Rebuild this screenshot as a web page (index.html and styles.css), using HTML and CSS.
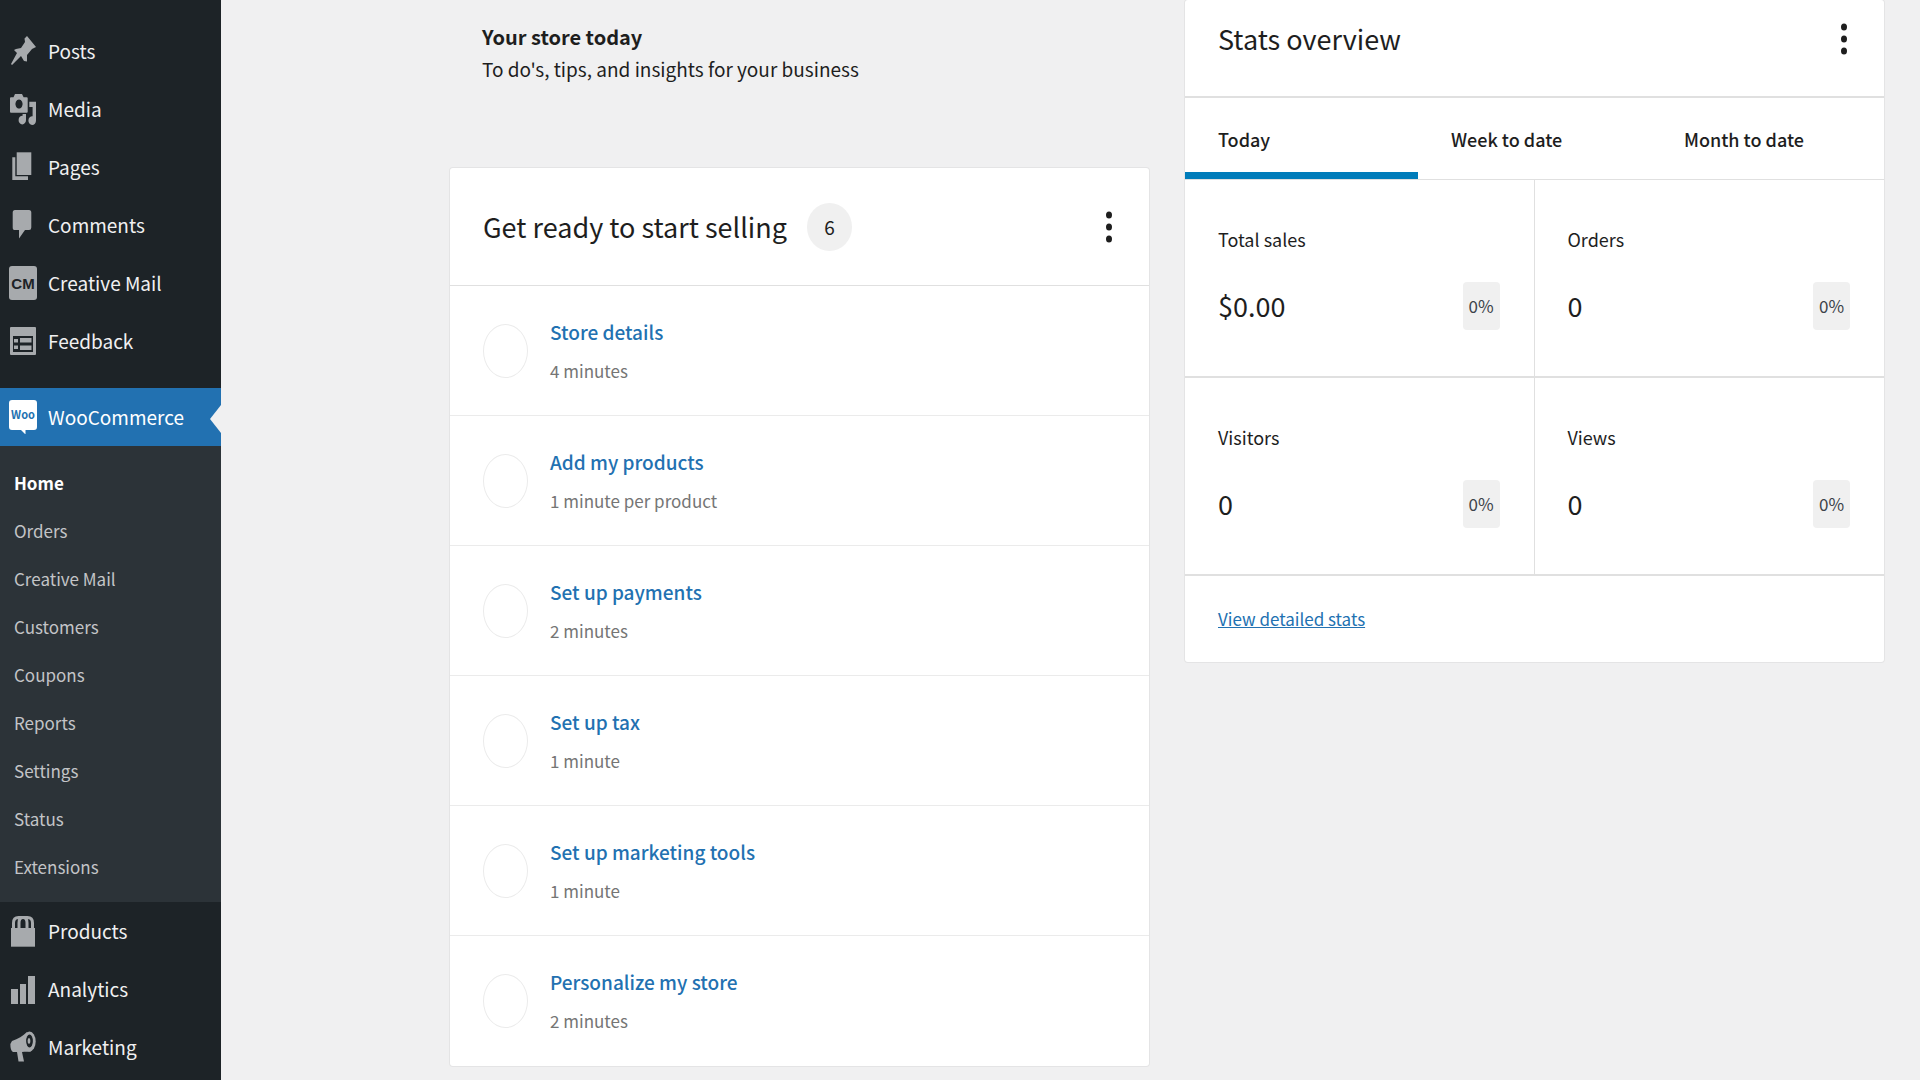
FILE: index.html
```html
<!DOCTYPE html>
<html lang="en">
<head>
<meta charset="utf-8">
<meta name="viewport" content="width=device-width, initial-scale=1">
<title>WooCommerce Home</title>
<link rel="stylesheet" href="styles.css">
</head>
<body>
<div class="layout">
  <nav class="sidebar" aria-label="Main menu">
    <ul class="menu">
      <li><a class="menu-link" href="#posts">
        <svg class="icon" viewBox="-1 -1 28 34" aria-hidden="true"><path d="M17 1l9 11-4 2-5 6v6.500l-3-.5-3-5-9 9-1-1 6-11-3-3 2-1 5-1 4-6-.5-3.500z"/></svg>
        Posts</a></li>
      <li><a class="menu-link" href="#media">
        <svg class="icon" viewBox="-1 -1 28 34" aria-hidden="true"><path fill-rule="evenodd" d="M1 4.300h2.500L5 1h7l1.600 3.300h3.100q1 0 1 1v13.400q0 1-1 1H1q-1 0-1-1V5.300q0-1 1-1zM9 6.400a3.600 4.600 0 1 0 .01 0z"/><path d="M19.300 8.700H26V27.500a3.800 4.300 0 1 1-3.400-4.200V14h-3.300z"/><path d="M12.600 21H16v6a3.700 4.300 0 1 1-3.400-4.200z"/></svg>
        Media</a></li>
      <li><a class="menu-link" href="#pages">
        <svg class="icon" viewBox="-1 -1 28 34" aria-hidden="true"><path d="M6.700 1.300h14.600V24H6.700z"/><path d="M2.300 6.300h3v19h12.700V29H2.300z"/></svg>
        Pages</a></li>
      <li><a class="menu-link" href="#comments">
        <svg class="icon" viewBox="-1 -1 28 34" aria-hidden="true"><path d="M5 1h14q2.300 0 2.300 2.600v14.800q0 2.600-2.300 2.600h-4L9 29.500V21H5q-2.300 0-2.300-2.600V3.600Q2.700 1 5 1z"/></svg>
        Comments</a></li>
      <li><a class="menu-link" href="#creative-mail">
        <svg class="icon" viewBox="-1 -1 28 34" aria-hidden="true"><rect x="-1" y="-1" width="28" height="34" rx="3"/><text class="icon-cm" x="13" y="22" text-anchor="middle">CM</text></svg>
        Creative Mail</a></li>
      <li><a class="menu-link" href="#feedback">
        <svg class="icon" viewBox="-1 -1 28 34" aria-hidden="true"><rect x="0" y="2" width="26" height="28" rx="1"/><path class="icon-cut" fill-rule="evenodd" d="M3 11h20v16H3zM4 14v3.500h4V14zm6-1v4.500h11.500V13zM4 20.500V24h4v-3.500zm6 0V25h11.500v-4.500z"/></svg>
        Feedback</a></li>
      <li class="menu-group"><a class="menu-link menu-link-active" href="#woocommerce">
        <svg class="icon" viewBox="-1 -1 28 34" aria-hidden="true"><path d="M2-1h22q3 0 3 3v24q0 3-3 3h-8.500v4.500L11 29H2q-3 0-3-3V2q0-3 3-3z"/><text class="icon-woo" x="13" y="18" text-anchor="middle">Woo</text></svg>
        WooCommerce</a>
        <ul class="submenu">
          <li><a class="submenu-link submenu-link-active" href="#home" aria-current="page">Home</a></li>
          <li><a class="submenu-link" href="#orders">Orders</a></li>
          <li><a class="submenu-link" href="#mail">Creative Mail</a></li>
          <li><a class="submenu-link" href="#customers">Customers</a></li>
          <li><a class="submenu-link" href="#coupons">Coupons</a></li>
          <li><a class="submenu-link" href="#reports">Reports</a></li>
          <li><a class="submenu-link" href="#settings">Settings</a></li>
          <li><a class="submenu-link" href="#status">Status</a></li>
          <li><a class="submenu-link" href="#extensions">Extensions</a></li>
        </ul>
      </li>
      <li><a class="menu-link" href="#products">
        <svg class="icon" viewBox="-1 -1 28 34" aria-hidden="true"><path d="M1 13h24v18.700H1z"/><path class="icon-line" d="M3.500 14V8q0-5.500 5-5.500h9q5 0 5 5.500v6M9 14V8q0-5.500 4-5.500T17 8v6"/></svg>
        Products</a></li>
      <li><a class="menu-link" href="#analytics">
        <svg class="icon" viewBox="-1 -1 28 34" aria-hidden="true"><path d="M1 16h7v15H1zM10 11h6v20h-6zM18 3h7v28h-7z"/></svg>
        Analytics</a></li>
      <li><a class="menu-link" href="#marketing">
        <svg class="icon" viewBox="-1 -1 28 34" aria-hidden="true"><path d="M17 1C13 5 8 8 2 10q-2 2-1.500 6 .5 4 2.500 5h4l1.500 9.500h5.500L12 21c3-.5 6 0 9-.5z"/><ellipse cx="19.500" cy="10.500" rx="6.200" ry="10"/><ellipse class="icon-ring" cx="19.500" cy="10" rx="3.400" ry="6.500"/><ellipse cx="19" cy="10" rx="1.400" ry="3"/></svg>
        Marketing</a></li>
    </ul>
  </nav>

  <main class="content">
    <section class="column">
      <header class="intro">
        <h1 class="intro-title">Your store today</h1>
        <p class="intro-text">To do's, tips, and insights for your business</p>
      </header>
      <section class="card">
        <header class="card-header tasks-header">
          <h2 class="card-title">Get ready to start selling</h2>
          <span class="count">6</span>
          <button class="more" type="button" aria-label="Task list options"><svg class="more-icon" viewBox="0 0 8 32" aria-hidden="true"><ellipse cx="4" cy="4" rx="3" ry="3.500"/><ellipse cx="4" cy="16" rx="3" ry="3.500"/><ellipse cx="4" cy="28" rx="3" ry="3.500"/></svg></button>
        </header>
        <ul class="tasks">
          <li class="task"><span class="task-status"></span><div><a class="task-title" href="#store-details">Store details</a><p class="task-time">4 minutes</p></div></li>
          <li class="task"><span class="task-status"></span><div><a class="task-title" href="#add-products">Add my products</a><p class="task-time">1 minute per product</p></div></li>
          <li class="task"><span class="task-status"></span><div><a class="task-title" href="#payments">Set up payments</a><p class="task-time">2 minutes</p></div></li>
          <li class="task"><span class="task-status"></span><div><a class="task-title" href="#tax">Set up tax</a><p class="task-time">1 minute</p></div></li>
          <li class="task"><span class="task-status"></span><div><a class="task-title" href="#marketing-tools">Set up marketing tools</a><p class="task-time">1 minute</p></div></li>
          <li class="task"><span class="task-status"></span><div><a class="task-title" href="#personalize">Personalize my store</a><p class="task-time">2 minutes</p></div></li>
        </ul>
      </section>
    </section>

    <section class="column">
      <section class="card stats">
        <header class="card-header stats-header">
          <h2 class="card-title">Stats overview</h2>
          <button class="more" type="button" aria-label="Stats options"><svg class="more-icon" viewBox="0 0 8 32" aria-hidden="true"><ellipse cx="4" cy="4" rx="3" ry="3.500"/><ellipse cx="4" cy="16" rx="3" ry="3.500"/><ellipse cx="4" cy="28" rx="3" ry="3.500"/></svg></button>
        </header>
        <div class="tabs" role="tablist">
          <button class="tab tab-active" type="button" role="tab" aria-selected="true">Today</button>
          <button class="tab" type="button" role="tab" aria-selected="false">Week to date</button>
          <button class="tab" type="button" role="tab" aria-selected="false">Month to date</button>
        </div>
        <div class="stat-grid">
          <div class="stat"><p class="stat-label">Total sales</p><div class="stat-row"><span class="stat-value">$0.00</span><span class="stat-change">0%</span></div></div>
          <div class="stat"><p class="stat-label">Orders</p><div class="stat-row"><span class="stat-value">0</span><span class="stat-change">0%</span></div></div>
          <div class="stat"><p class="stat-label">Visitors</p><div class="stat-row"><span class="stat-value">0</span><span class="stat-change">0%</span></div></div>
          <div class="stat"><p class="stat-label">Views</p><div class="stat-row"><span class="stat-value">0</span><span class="stat-change">0%</span></div></div>
        </div>
        <footer class="stats-footer"><a class="stats-link" href="#stats">View detailed stats</a></footer>
      </section>
    </section>
  </main>
</div>
</body>
</html>
```
FILE: styles.css
```css
*, *::before, *::after { box-sizing: border-box; }

body {
  margin: 0;
  background: #f0f0f1;
  color: #1e1e1e;
  font-family: "Noto Sans CJK SC", "Noto Sans", sans-serif;
  font-size: 19px;
  line-height: 32px;
}

h1, h2, p, ul { margin: 0; padding: 0; font-weight: 400; }
ul { list-style: none; }
a { text-decoration: none; }
button { padding: 0; border: 0; background: none; color: inherit; font: inherit; cursor: pointer; }

.layout { display: flex; min-height: 100vh; }

/* Sidebar */
.sidebar { flex: 0 0 221px; padding-top: 22px; background: #1d2327; }
.menu-link {
  display: flex;
  align-items: center;
  gap: 11px;
  height: 58px;
  padding-left: 9px;
  color: #f0f0f1;
}
.menu-group { margin-top: 18px; }
.menu-link-active { position: relative; background: #2271b1; color: #fff; }
.menu-link-active::after {
  content: "";
  position: absolute;
  top: 17px;
  right: 0;
  border: solid transparent;
  border-width: 14px 11px 14px 0;
  border-right-color: #f0f0f1;
}
.icon { flex: none; width: 28px; height: 34px; fill: #a7aaad; }
.menu-link-active .icon { fill: #fff; }
.menu-link .icon-cut, .menu-link .icon-ring, .menu-link .icon-cm { fill: #1d2327; }
.icon-line { fill: none; stroke: #a7aaad; stroke-width: 3; }
.icon-cm { font: 700 15px "Liberation Sans", sans-serif; }
.icon-woo { fill: #2271b1; font: 700 11px "Noto Sans CJK SC", sans-serif; }

.submenu { padding: 13px 0 11px; background: #2c3338; }
.submenu-link { display: flex; align-items: center; height: 48px; padding-left: 14px; color: #c3c4c7; font-size: 17px; }
.submenu-link-active { color: #fff; font-weight: 700; }

/* Content */
.content { flex: 1; display: flex; align-items: flex-start; gap: 36px; padding: 0 36px 12px 229px; }
.column { flex: 1; min-width: 0; }
.intro { height: 168px; padding: 21px 32px; }
.intro-title { font-size: 20px; font-weight: 700; }

.card { background: #fff; border-radius: 3px; box-shadow: 0 0 0 1px #e4e4e5; }
.card-header { display: flex; align-items: center; padding: 0 32px 0 33px; }
.card-title { font-size: 27px; line-height: 40px; }
.tasks-header { height: 118px; border-bottom: 1px solid #e0e0e0; }
.count {
  width: 45px;
  height: 48px;
  margin-left: 20px;
  border-radius: 50%;
  background: #f0f0f0;
  line-height: 48px;
  text-align: center;
}
.more { display: flex; margin-left: auto; padding: 4px; }
.more-icon { width: 8px; height: 32px; fill: #1e1e1e; }

.task { display: flex; align-items: center; gap: 22px; height: 130px; padding: 0 33px; border-bottom: 1px solid #ebebeb; }
.task:last-child { border-bottom: 0; }
.task-status { width: 45px; height: 54px; border: 1px solid #ebebeb; border-radius: 50%; }
.task-title { display: block; color: #2271b1; font-weight: 500; line-height: 40px; }
.task-time { color: #757575; font-size: 17px; line-height: 38px; }

/* Stats */
.stats-header { height: 98px; padding-bottom: 18px; border-bottom: 2px solid #e0e0e0; }
.tabs { display: grid; grid-template-columns: repeat(3, 1fr); border-bottom: 1px solid #e0e0e0; }
.tab { height: 81px; padding: 7px 33px 0; border-bottom: 7px solid transparent; font-size: 18px; font-weight: 500; text-align: left; }
.tab-active { border-bottom-color: #007cba; }
.stat-grid { display: grid; grid-template-columns: repeat(2, 1fr); }
.stat { height: 198px; padding: 43px 34px 0 33px; border-bottom: 2px solid #e0e0e0; }
.stat:nth-child(odd) { border-right: 1px solid #e0e0e0; }
.stat-label { font-size: 18px; }
.stat-row { display: flex; align-items: center; justify-content: space-between; height: 48px; margin-top: 27px; }
.stat-value { font-size: 27px; }
.stat-change { width: 37px; height: 48px; border-radius: 4px; background: #f0f0f0; color: #3c434a; font-size: 17px; line-height: 48px; text-align: center; }
.stats-footer { display: flex; align-items: center; height: 86px; padding: 0 33px; }
.stats-link { color: #2271b1; font-size: 17px; text-decoration: underline; }
```
